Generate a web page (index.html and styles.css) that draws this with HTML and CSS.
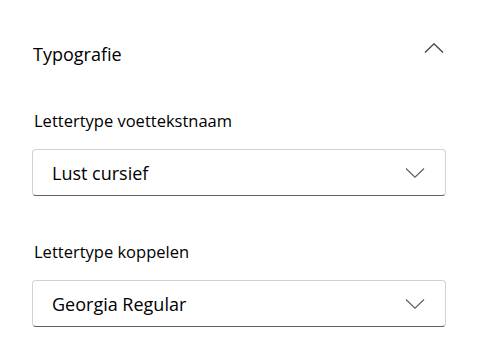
FILE: index.html
```html
<!DOCTYPE html>
<html lang="nl">
<head>
<meta charset="utf-8">
<title>Typografie</title>
<link rel="stylesheet" href="styles.css">
</head>
<body>
<section class="panel">
  <div class="header">
    <h2 class="title">Typografie</h2>
    <svg class="chev-up" width="20" height="10" viewBox="0 0 20 10" aria-hidden="true">
      <path d="M1 9.5 L10 0.8 L19 9.5" fill="none" stroke="#424242" stroke-width="1.3"/>
    </svg>
  </div>
  <div class="field">
    <label class="label">Lettertype voettekstnaam</label>
    <div class="dropdown">
      <span class="value">Lust cursief</span>
      <svg class="chev-down" width="20" height="10" viewBox="0 0 20 10" aria-hidden="true">
        <path d="M1 0.5 L10 9.2 L19 0.5" fill="none" stroke="#616161" stroke-width="1.2"/>
      </svg>
    </div>
  </div>
  <div class="field">
    <label class="label">Lettertype koppelen</label>
    <div class="dropdown">
      <span class="value">Georgia Regular</span>
      <svg class="chev-down" width="20" height="10" viewBox="0 0 20 10" aria-hidden="true">
        <path d="M1 0.5 L10 9.2 L19 0.5" fill="none" stroke="#616161" stroke-width="1.2"/>
      </svg>
    </div>
  </div>
</section>
</body>
</html>
```
FILE: styles.css
```css
html, body {
  margin: 0;
  padding: 0;
  background: #ffffff;
}
body {
  font-family: "Open Sans", "Noto Sans", "Liberation Sans", sans-serif;
  color: #242424;
}
.panel {
  padding: 34px 32px 0 32px;
  display: flex;
  flex-direction: column;
}
.header {
  display: flex;
  align-items: center;
  justify-content: space-between;
  height: 40px;
  padding-left: 1px;
  padding-right: 2px;
}
.title {
  margin: 0;
  font-size: 18px;
  font-weight: 400;
  line-height: 40px;
  color: #000000;
}
.chev-up {
  display: block;
  margin-top: -13px;
}
.field {
  display: flex;
  flex-direction: column;
  gap: 17px;
  margin-top: 36px;
}
.field + .field {
  margin-top: 45px;
}
.label {
  font-size: 16.5px;
  line-height: 22px;
  padding-left: 2px;
  color: #000000;
}
.dropdown {
  box-sizing: border-box;
  height: 47px;
  display: flex;
  align-items: center;
  justify-content: space-between;
  border: 1px solid #d1d1d1;
  border-bottom-color: #616161;
  border-radius: 4px;
  padding: 1px 20px 0 19px;
}
.value {
  font-size: 18px;
  line-height: 24px;
  color: #000000;
}
.chev-down {
  display: block;
  margin-top: -1px;
}
```
